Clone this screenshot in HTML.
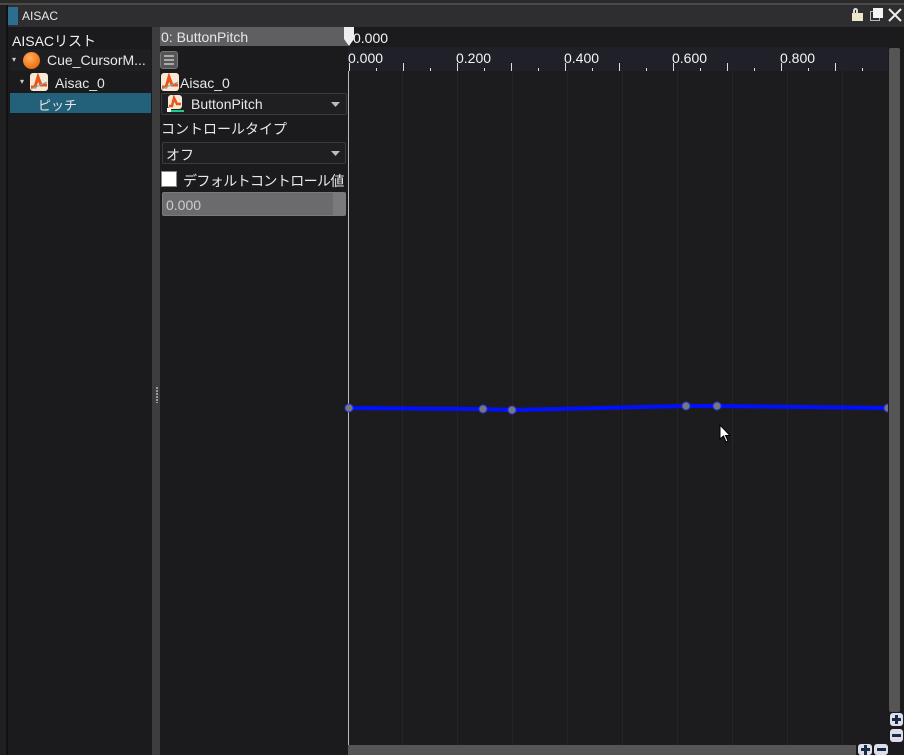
<!DOCTYPE html>
<html><head><meta charset="utf-8"><style>
*{margin:0;padding:0;box-sizing:border-box}
body{width:904px;height:755px;background:#1b1b1d;position:relative;overflow:hidden;font-family:"Liberation Sans","Noto Sans CJK JP",sans-serif;font-size:13px;color:#e8e8e8}
.a{position:absolute}
.t{position:absolute;white-space:nowrap}
.ico{position:absolute;width:18px;height:18px;border-radius:3px;background:#f6e9d6;overflow:hidden}
</style></head><body>
<div class="a" style="left:0;top:0;width:904px;height:5px;background:#2a2a2a"></div>
<div class="a" style="left:0;top:3px;width:904px;height:2px;background:#4a4a4a"></div>
<div class="a" style="left:0;top:5px;width:8px;height:750px;background:#202022"></div>
<div class="a" style="left:6px;top:5px;width:2px;height:750px;background:#111"></div>
<div class="a" style="left:8px;top:5px;width:896px;height:22px;background:#2e2e30"></div>
<div class="a" style="left:8px;top:7px;width:10px;height:18px;background:#2a6f8f"></div>
<div class="t" style="left:22px;top:9px;font-size:12px;color:#e8e8e8">AISAC</div>
<div class="a" style="left:852px;top:13px;width:11px;height:8px;background:#eee6c8"></div>
<div class="a" style="left:853px;top:8px;width:5px;height:6px;border:2px solid #ddd;border-bottom:none;border-radius:3px 3px 0 0"></div>
<div class="a" style="left:870px;top:11px;width:10px;height:10px;border:1px solid #bbb"></div>
<div class="a" style="left:873px;top:8px;width:10px;height:10px;background:#f4f4f4"></div>
<svg class="a" style="left:887px;top:7px" width="16" height="16"><path d="M2 2L14 14M14 2L2 14" stroke="#eee" stroke-width="2"/></svg>
<div class="a" style="left:9px;top:27px;width:143px;height:728px;background:#1b1b1d"></div>
<div class="t" style="left:12px;top:31px;font-size:14px;color:#f0f0f0">AISACリスト</div>
<div class="a" style="left:10px;top:49px;width:141px;height:22px;background:#1f1f21"></div>
<div class="t" style="left:12px;top:55px;font-size:8px;color:#ccc">▾</div>
<div class="a" style="left:23px;top:52px;width:17px;height:17px;border-radius:50%;background:radial-gradient(circle at 40% 35%,#ffb060,#f07010 70%,#c05000)"></div>
<div class="t" style="left:47px;top:52px;font-size:14px">Cue_CursorM...</div>
<div class="t" style="left:20px;top:77px;font-size:8px;color:#ccc">▾</div>
<div class="ico" style="left:30px;top:73px"><svg width="18" height="18"><path d="M1 14L5 14L8 4L11 12L17 12" stroke="#e8541a" stroke-width="3" fill="none"/><path d="M1 16L17 9" stroke="#8ab" stroke-width="1"/></svg></div>
<div class="t" style="left:55px;top:75px;font-size:14px">Aisac_0</div>
<div class="a" style="left:10px;top:93px;width:141px;height:20px;background:#23617a"></div>
<div class="t" style="left:38px;top:95px;font-size:13px">ピッチ</div>
<div class="a" style="left:152px;top:27px;width:8px;height:728px;background:#3d3d3f"></div>
<div class="a" style="left:156px;top:387px;width:2px;height:16px;background:repeating-linear-gradient(#999 0 2px,transparent 2px 3px)"></div>
<div class="a" style="left:160px;top:27px;width:188px;height:728px;background:#1b1b1d"></div>
<div class="a" style="left:160px;top:27px;width:188px;height:19px;background:#5f5f61"></div>
<div class="t" style="left:161px;top:29px;font-size:14px">0: ButtonPitch</div>
<div class="a" style="left:160px;top:51px;width:18px;height:18px;background:#555;border:1px solid #777;border-radius:3px"></div>
<div class="a" style="left:164px;top:55px;width:10px;height:10px;background:repeating-linear-gradient(#aaa 0 2px,transparent 2px 4px)"></div>
<div class="ico" style="left:161px;top:73px"><svg width="18" height="18"><path d="M1 14L5 14L8 4L11 12L17 12" stroke="#e8541a" stroke-width="3" fill="none"/><path d="M1 16L17 9" stroke="#8ab" stroke-width="1"/></svg></div>
<div class="t" style="left:180px;top:75px;font-size:14px">Aisac_0</div>
<div class="a" style="left:161px;top:93px;width:186px;height:22px;background:#1f1f21;border:1px solid #3a3a3c;border-radius:2px"></div>
<div class="ico" style="left:168px;top:95px;width:14px;height:14px"><svg width="14" height="14"><path d="M1 11L4 11L6 3L9 9L13 9" stroke="#e8541a" stroke-width="2.5" fill="none"/></svg></div>
<div class="a" style="left:168px;top:110px;width:16px;height:2px;background:#2c8"></div>
<div class="a" style="left:167px;top:108px;width:4px;height:4px;background:#fff"></div>
<div class="t" style="left:191px;top:96px;font-size:14px">ButtonPitch</div>
<svg class="a" style="left:331px;top:102px" width="9" height="5"><path d="M0 0H9L4.5 5Z" fill="#bbb"/></svg>
<div class="t" style="left:161px;top:119px;font-size:14px">コントロールタイプ</div>
<div class="a" style="left:162px;top:142px;width:184px;height:22px;background:#1f1f21;border:1px solid #3a3a3c;border-radius:2px"></div>
<div class="t" style="left:166px;top:145px;font-size:14px">オフ</div>
<svg class="a" style="left:331px;top:151px" width="9" height="5"><path d="M0 0H9L4.5 5Z" fill="#bbb"/></svg>
<div class="a" style="left:161px;top:171px;width:16px;height:16px;background:#fff;border:1px solid #888"></div>
<div class="t" style="left:183px;top:171px;font-size:14px;letter-spacing:-0.6px">デフォルトコントロール値</div>
<div class="a" style="left:162px;top:192px;width:184px;height:24px;background:#6b6b6d;border:1px solid #7a7a7a;border-radius:2px"></div>
<div class="t" style="left:166px;top:197px;font-size:14px;color:#ccc">0.000</div>
<div class="a" style="left:333px;top:193px;width:12px;height:22px;background:#7a7a7c"></div>
<div class="a" style="left:348px;top:27px;width:556px;height:20px;background:#1b1b1d"></div>
<svg class="a" style="left:342px;top:27px" width="14" height="20"><path d="M2 0H12V12L7 19L2 12Z" fill="#eee"/></svg>
<div class="t" style="left:353px;top:30px;font-size:14px;color:#f4f4f4">0.000</div>
<div class="a" style="left:348px;top:47px;width:556px;height:24px;background:#1f2028"></div>
<div class="a" style="left:348px;top:71px;width:540px;height:674px;background:#1c1c1e;
background-image:repeating-linear-gradient(90deg,transparent 0 54px,#252527 54px 55px)"></div>
<svg class="a" style="left:348px;top:47px" width="540" height="24">
<g stroke="#ddd" stroke-width="1">
<path d="M1.5 16V24M55.5 16V24M109.5 16V24M163.5 16V24M217.5 16V24M271.5 16V24M325.5 16V24M379.5 16V24M433.5 16V24M487.5 16V24"/>
<path d="M28.5 21V24M82.5 21V24M136.5 21V24M190.5 21V24M244.5 21V24M298.5 21V24M352.5 21V24M406.5 21V24M460.5 21V24M514.5 21V24"/>
</g></svg>
<div class="t" style="left:348px;top:50px;font-size:14px;color:#f4f4f4">0.000</div>
<div class="t" style="left:456px;top:50px;font-size:14px;color:#f4f4f4">0.200</div>
<div class="t" style="left:564px;top:50px;font-size:14px;color:#f4f4f4">0.400</div>
<div class="t" style="left:672px;top:50px;font-size:14px;color:#f4f4f4">0.600</div>
<div class="t" style="left:780px;top:50px;font-size:14px;color:#f4f4f4">0.800</div>
<div class="a" style="left:348px;top:71px;width:1px;height:674px;background:#bbb"></div>
<svg class="a" style="left:340px;top:395px" width="560" height="30">
<polyline points="9,13 143,14 172,15 346,11 377,11 548,13" fill="none" stroke="#0010ff" stroke-width="4"/>
<g fill="#777" stroke="#2233ee" stroke-width="1">
<circle cx="9" cy="13" r="4"/><circle cx="143" cy="14" r="4"/><circle cx="172" cy="15" r="4"/><circle cx="346" cy="11" r="4"/><circle cx="377" cy="11" r="4"/><circle cx="548" cy="13" r="4"/></g></svg>
<svg class="a" style="left:719px;top:424px" width="14" height="20"><path d="M1 1V15L4.5 12L7 18L9 17L6.5 11.5H11Z" fill="#fff" stroke="#000" stroke-width="1"/></svg>
<div class="a" style="left:888px;top:47px;width:16px;height:708px;background:#1b1b1d"></div>
<div class="a" style="left:889px;top:48px;width:11px;height:664px;background:#555;border-radius:2px"></div>
<div class="a" style="left:890px;top:713px;width:13px;height:13px;background:#dde;border-radius:3px"></div>
<div class="a" style="left:892px;top:718px;width:9px;height:3px;background:#1a2a40"></div>
<div class="a" style="left:895px;top:715px;width:3px;height:9px;background:#1a2a40"></div>
<div class="a" style="left:890px;top:729px;width:13px;height:13px;background:#dde;border-radius:3px"></div>
<div class="a" style="left:892px;top:734px;width:9px;height:3px;background:#1a2a40"></div>
<div class="a" style="left:348px;top:745px;width:508px;height:10px;background:#555"></div>
<div class="a" style="left:858px;top:744px;width:14px;height:11px;background:#dde;border-radius:3px"></div>
<div class="a" style="left:861px;top:748px;width:9px;height:3px;background:#1a2a40"></div>
<div class="a" style="left:864px;top:745px;width:3px;height:10px;background:#1a2a40"></div>
<div class="a" style="left:874px;top:744px;width:14px;height:11px;background:#dde;border-radius:3px"></div>
<div class="a" style="left:877px;top:748px;width:9px;height:3px;background:#1a2a40"></div>
</body></html>
